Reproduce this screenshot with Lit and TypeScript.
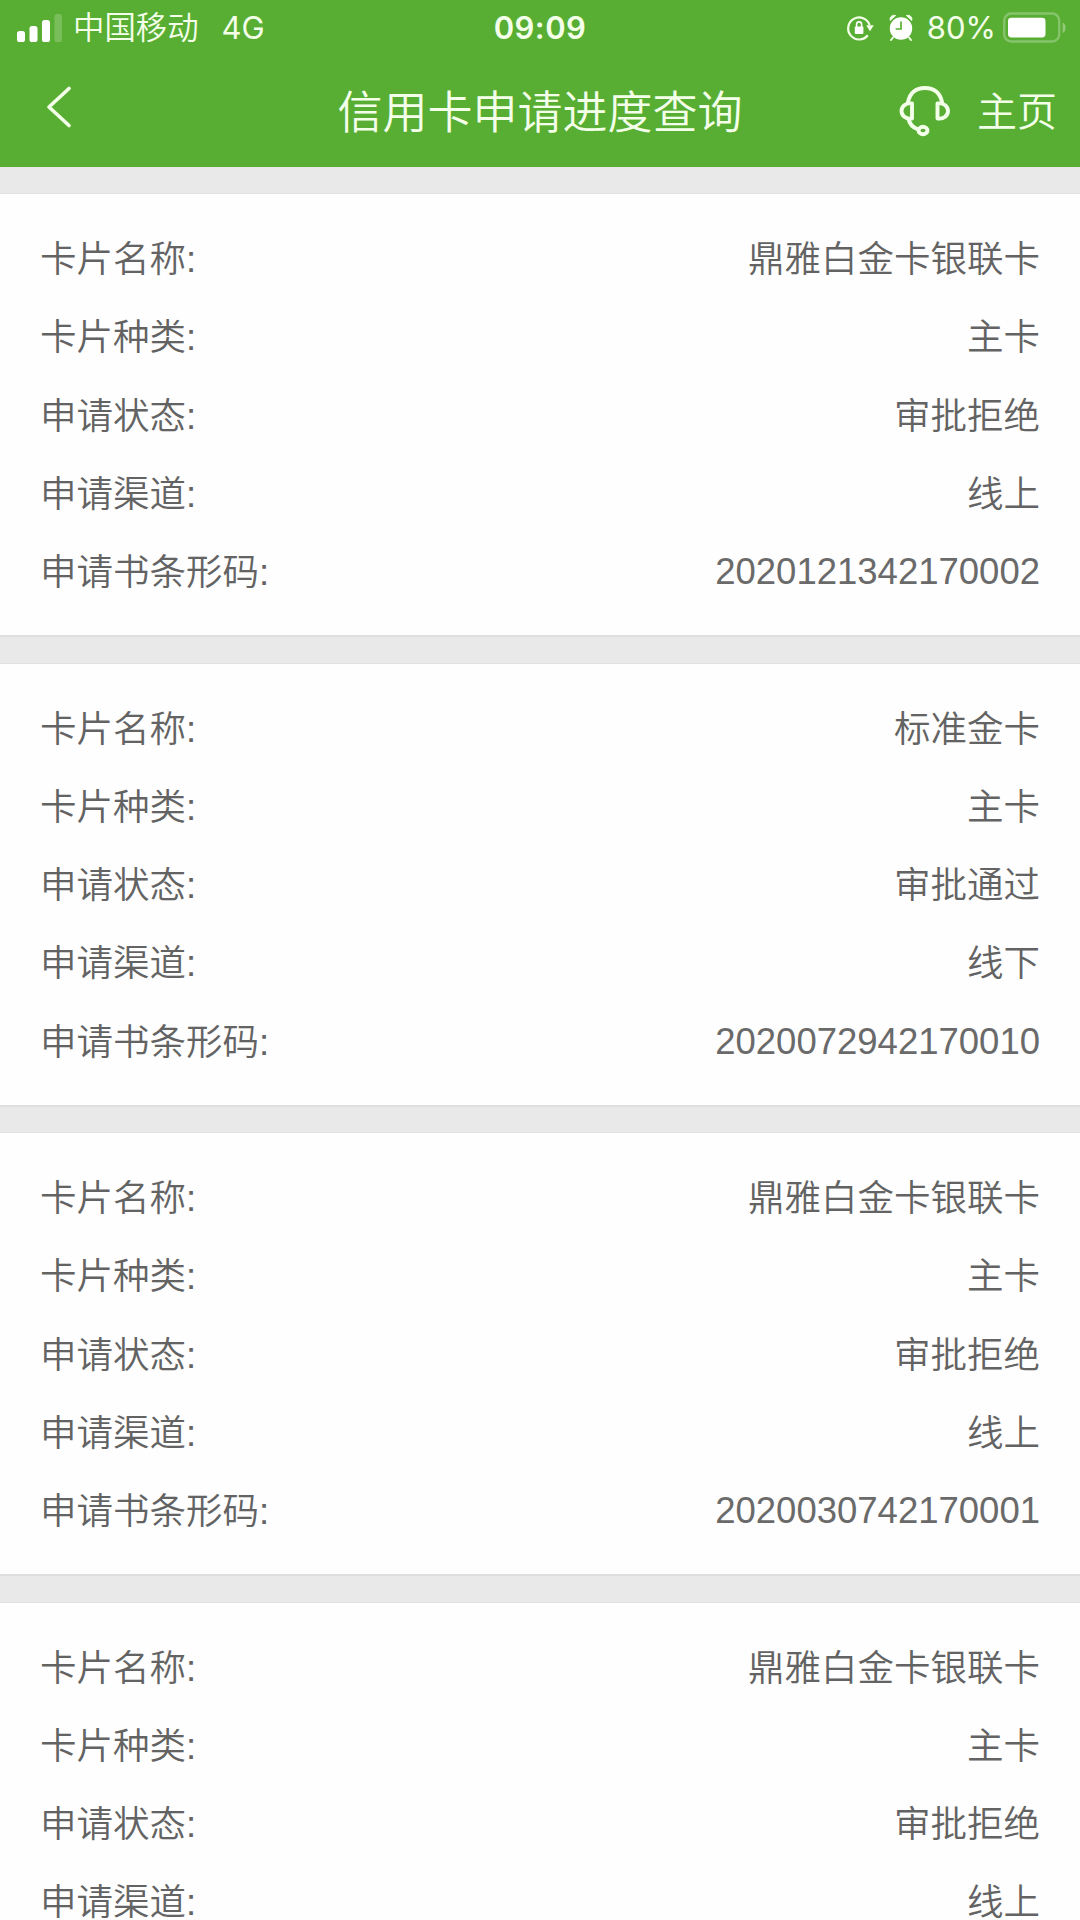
import { LitElement, html, css } from "lit";
import { customElement, property } from "lit/decorators.js";

interface Application {
  name: string;
  kind: string;
  status: string;
  channel: string;
  barcode?: string;
}

const APPLICATIONS: Application[] = [
  { name: "鼎雅白金卡银联卡", kind: "主卡", status: "审批拒绝", channel: "线上", barcode: "2020121342170002" },
  { name: "标准金卡", kind: "主卡", status: "审批通过", channel: "线下", barcode: "2020072942170010" },
  { name: "鼎雅白金卡银联卡", kind: "主卡", status: "审批拒绝", channel: "线上", barcode: "2020030742170001" },
  { name: "鼎雅白金卡银联卡", kind: "主卡", status: "审批拒绝", channel: "线上" },
];

const FIELDS: [keyof Application, string][] = [
  ["name", "卡片名称:"],
  ["kind", "卡片种类:"],
  ["status", "申请状态:"],
  ["channel", "申请渠道:"],
  ["barcode", "申请书条形码:"],
];

@customElement("status-bar")
export class StatusBar extends LitElement {
  static styles = css`
    :host {
      display: grid;
      grid-template-columns: 1fr auto 1fr;
      align-items: center;
      height: 54px;
      padding: 0 14px 0 17px;
      box-sizing: border-box;
      color: #f4ffea;
      font-family: Inter, "Noto Sans CJK SC", sans-serif;
      font-size: 31px;
      line-height: 54px;
      white-space: nowrap;
    }
    .side { display: flex; align-items: center; height: 54px; }
    .right { justify-content: flex-end; }
    svg { display: block; flex: none; }
    .carrier {
      margin: 0 0 3px 10px;
      font-family: "Noto Sans CJK SC DemiLight", "Noto Sans CJK SC", sans-serif;
      font-size: 31.4px;
      font-weight: 350;
    }
    .network { margin: 1px 0 0 23px; font-size: 31px; font-weight: 375; }
    .time { margin: 1px 3px 0 0; font-weight: 600; font-size: 31px; letter-spacing: 0.4px; }
    .lock { margin-right: 15px; }
    .alarm { margin-right: 14px; }
    .percent { margin-top: 1px; font-weight: 375; margin-right: 7px; }
  `;

  render() {
    return html`
      <div class="side">
        <svg width="46" height="30" viewBox="0 0 46 30" fill="#fff">
          <rect x="0" y="18" width="8" height="11" rx="2.6" />
          <rect x="12.5" y="13" width="8" height="16" rx="2.6" />
          <rect x="25" y="7" width="8" height="22" rx="2.6" />
          <rect x="37.5" y="1" width="7.5" height="28" rx="2.6" opacity=".2" />
        </svg>
        <span class="carrier">中国移动</span>
        <span class="network">4G</span>
      </div>
      <span class="time">09:09</span>
      <div class="side right">
        <svg class="lock" width="28" height="28" viewBox="0 0 28 28" fill="none">
          <path d="M21.8 21.3A11 11 0 1 1 23.6 11" stroke="#f4ffea" stroke-width="2.2" />
          <path d="M20.2 11.2h7.600l-3.800 6z" fill="#f4ffea" />
          <rect x="8.8" y="12.6" width="8.6" height="7.4" rx="1" fill="#fff" />
          <path d="M10.6 13v-2.600a2.500 2.500 0 0 1 5 0V13" stroke="#fff" stroke-width="1.6" />
        </svg>
        <svg class="alarm" width="24" height="28" viewBox="0 0 24 28">
          <circle cx="12" cy="14.5" r="11.2" fill="#fff" />
          <path d="M1.2 6.4A4 4 0 0 1 6.6 1.6zM22.8 6.4A4 4 0 0 0 17.4 1.6z" fill="#f4ffea" stroke="#f4ffea" stroke-linejoin="round" />
          <path d="M4 23.5l-2 2.5M20 23.5l2 2.5" stroke="#f4ffea" stroke-width="2" stroke-linecap="round" />
          <path d="M12 7.5V15H6.6" fill="none" stroke="#58ae33" stroke-width="1.7" />
        </svg>
        <span class="percent">80%</span>
        <svg width="63" height="32" viewBox="0 0 63 32">
          <rect x="1.2" y="1.500" width="55" height="28" rx="7" fill="none" stroke="#fff" stroke-opacity=".28" stroke-width="2.4" />
          <rect x="5" y="5.800" width="37.5" height="19.6" rx="3.4" fill="#fff" />
          <path d="M59.6 10.500v10.400c4-1.400 4-9 0-10.400z" fill="#fff" opacity=".35" />
        </svg>
      </div>
    `;
  }
}

@customElement("nav-bar")
export class NavBar extends LitElement {
  static styles = css`
    :host {
      display: grid;
      grid-template-columns: 1fr auto 1fr;
      align-items: center;
      height: 110px;
      padding: 0 23px 0 46px;
      box-sizing: border-box;
      color: #f4ffea;
      font-family: "Noto Sans CJK SC DemiLight", "Noto Sans CJK SC", sans-serif;
      font-weight: 350;
      white-space: nowrap;
    }
    .side { display: flex; align-items: center; height: 100%; }
    .right { justify-content: flex-end; }
    svg { display: block; flex: none; }
    .back { margin-bottom: 6px; }
    .title { font-size: 45px; line-height: 110px; margin-right: 23px; }
    .headset { margin: 1px 26px 0 0; }
    .home { margin-bottom: 2px; font-size: 40px; line-height: 110px; }
  `;

  render() {
    return html`
      <div class="side">
        <svg class="back" width="26" height="42" viewBox="0 0 26 42">
          <path d="M23 2.5L3 21l20 18.5" fill="none" stroke="#f4ffea" stroke-width="3.6" stroke-linecap="round" stroke-linejoin="round" />
        </svg>
      </div>
      <span class="title">信用卡申请进度查询</span>
      <div class="side right">
        <svg class="headset" width="52" height="52" viewBox="0 0 52 52" fill="none" stroke="#f4ffea" stroke-width="3.9" stroke-linecap="round" stroke-linejoin="round">
          <path d="M9 17C11 8 17 3 26 3S41 8 43 17" />
          <path d="M13 18.500v15c-6.500 1-10.500-3-10.500-7.500S6.500 17.500 13 18.500z" />
          <path d="M38.500 18.500v15c6.500 1 10.500-3 10.500-7.500S45 17.500 38.500 18.500z" />
          <path d="M9.500 34c1 5 4.500 8.500 9.500 10.500" />
          <ellipse cx="24" cy="45.500" rx="4.500" ry="3.700" />
        </svg>
        <span class="home">主页</span>
      </div>
    `;
  }
}

@customElement("application-card")
export class ApplicationCard extends LitElement {
  @property({ attribute: false }) item!: Application;

  static styles = css`
    :host {
      display: block;
      flex: none;
      height: 441px;
      padding: 27px 40px 0;
      box-sizing: border-box;
      background: #fefefe;
      box-shadow: 0 -1px 0 #e1e1e1, 0 2px 0 #dedede;
    }
    .row {
      display: flex;
      justify-content: space-between;
      height: 78.25px;
      line-height: 78.25px;
      font-family: "Liberation Sans", "Noto Sans CJK SC DemiLight", "Noto Sans CJK SC", sans-serif;
      font-size: 36.5px;
      font-weight: 350;
      color: #636363;
      white-space: nowrap;
    }
    .barcode { color: #6a6a6a; line-height: 76.5px; }
  `;

  render() {
    return html`${FIELDS.filter(([key]) => this.item[key]).map(
      ([key, label]) => html`<div class="row"><span>${label}</span><span class=${key}>${this.item[key]}</span></div>`
    )}`;
  }
}

@customElement("app-root")
export class AppRoot extends LitElement {
  static styles = css`
    :host {
      display: flex;
      flex-direction: column;
      height: 1920px;
      overflow: hidden;
      background: #e9e9e9;
    }
    .header { flex: none; height: 167px; background: #58ae33; }
    .list { display: flex; flex-direction: column; gap: 28.5px; padding-top: 27px; }
  `;

  render() {
    return html`
      <div class="header">
        <status-bar></status-bar>
        <nav-bar></nav-bar>
      </div>
      <div class="list">
        ${APPLICATIONS.map((a) => html`<application-card .item=${a}></application-card>`)}
      </div>
    `;
  }
}
